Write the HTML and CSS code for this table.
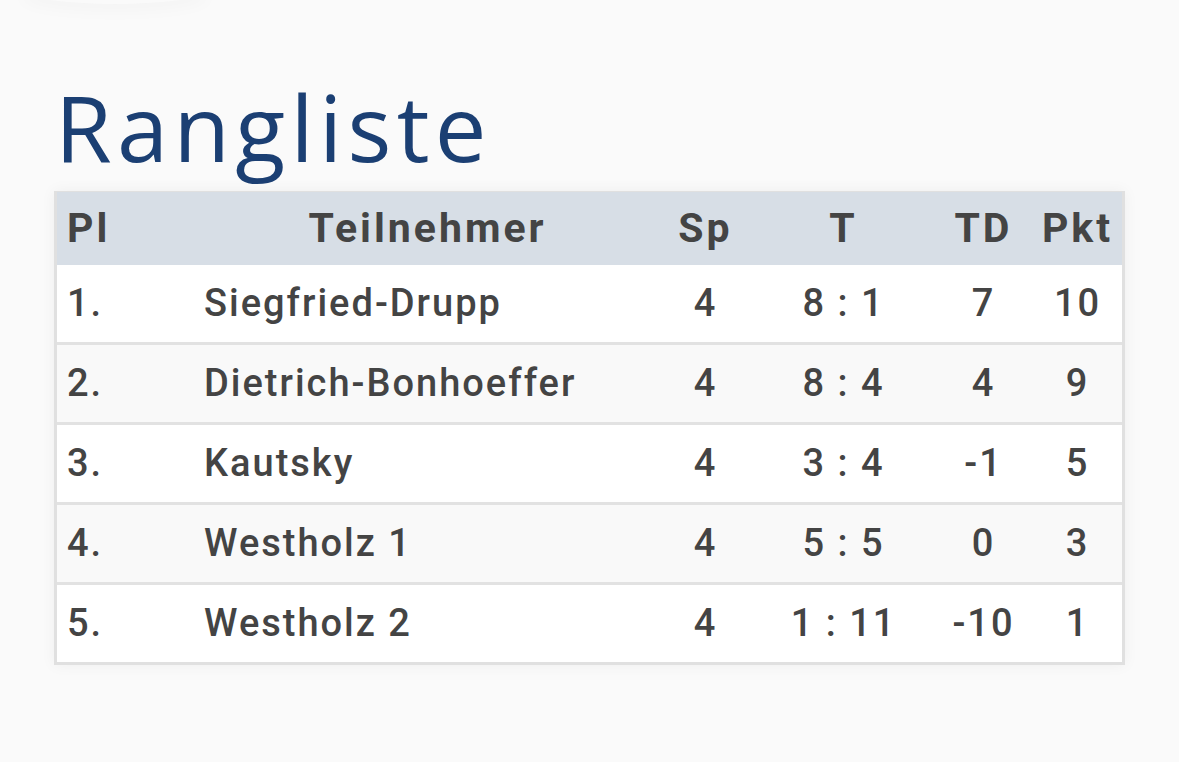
FILE: index.html
```html
<!DOCTYPE html>
<html lang="de">
<head>
<meta charset="utf-8">
<title>Rangliste</title>
<link rel="stylesheet" href="styles.css">
</head>
<body>
<div class="topshade"></div>
<main class="page">
  <h1 class="title">Rangliste</h1>
  <table class="ranking">
    <colgroup>
      <col class="c-pl"><col class="c-name"><col class="c-sp"><col class="c-t"><col class="c-td"><col class="c-pkt">
    </colgroup>
    <thead>
      <tr><th class="left">Pl</th><th>Teilnehmer</th><th>Sp</th><th>T</th><th>TD</th><th>Pkt</th></tr>
    </thead>
    <tbody>
      <tr><td class="left">1.</td><td class="left">Siegfried-Drupp</td><td>4</td><td>8 : 1</td><td>7</td><td>10</td></tr>
      <tr><td class="left">2.</td><td class="left">Dietrich-Bonhoeffer</td><td>4</td><td>8 : 4</td><td>4</td><td>9</td></tr>
      <tr><td class="left">3.</td><td class="left">Kautsky</td><td>4</td><td>3 : 4</td><td>-1</td><td>5</td></tr>
      <tr><td class="left">4.</td><td class="left">Westholz 1</td><td>4</td><td>5 : 5</td><td>0</td><td>3</td></tr>
      <tr><td class="left">5.</td><td class="left">Westholz 2</td><td>4</td><td>1 : 11</td><td>-10</td><td>1</td></tr>
    </tbody>
  </table>
</main>
</body>
</html>
```
FILE: styles.css
```css
html, body {
  margin: 0;
  padding: 0;
  background: #fafafa;
}
body {
  font-family: Roboto, "Liberation Sans", sans-serif;
  color: #444;
  position: relative;
  min-height: 762px;
}
.topshade {
  position: absolute;
  left: 20px;
  top: -26px;
  width: 190px;
  height: 30px;
  border-radius: 50%;
  background: #fafafa;
  box-shadow: 0 8px 16px rgba(0, 0, 0, 0.025);
}
.page {
  padding: 77px 0 0 54px;
}
.title {
  margin: 0 0 14px 1px;
  font-family: "Open Sans", "DejaVu Sans", sans-serif;
  font-weight: 400;
  font-size: 92px;
  line-height: 100px;
  letter-spacing: 5.3px;
  color: #1b3f73;
}
.ranking {
  width: 1071px;
  table-layout: fixed;
  border-collapse: separate;
  border-spacing: 0;
  border: 3px solid #e0e0e0;
  border-top-width: 1px;
  background: #fff;
  box-shadow: 0 0 14px rgba(0, 0, 0, 0.05);
}
.c-pl { width: 137px; }
.c-name { width: 464px; }
.c-sp { width: 92px; }
.c-t { width: 184px; }
.c-td { width: 96px; }
.c-pkt { width: 92px; }
.ranking th {
  background: #d7dee6;
  font-weight: 700;
  font-size: 41px;
  letter-spacing: 3px;
  line-height: 73px;
  height: 73px;
  padding: 0 8px 0 11px;
  text-align: center;
  color: #444;
}
.ranking td {
  font-size: 38px;
  font-weight: 500;
  letter-spacing: 2px;
  line-height: 77px;
  height: 77px;
  padding: 0 8px 0 11px;
  text-align: center;
  border-top: 3px solid #e2e2e2;
  white-space: nowrap;
}
.ranking tbody tr:first-child td {
  border-top: 0;
}
.ranking tbody tr:nth-child(even) td {
  background: #f9f9f9;
}
.ranking th.left,
.ranking td.left {
  text-align: left;
  padding-left: 10px;
}
```
